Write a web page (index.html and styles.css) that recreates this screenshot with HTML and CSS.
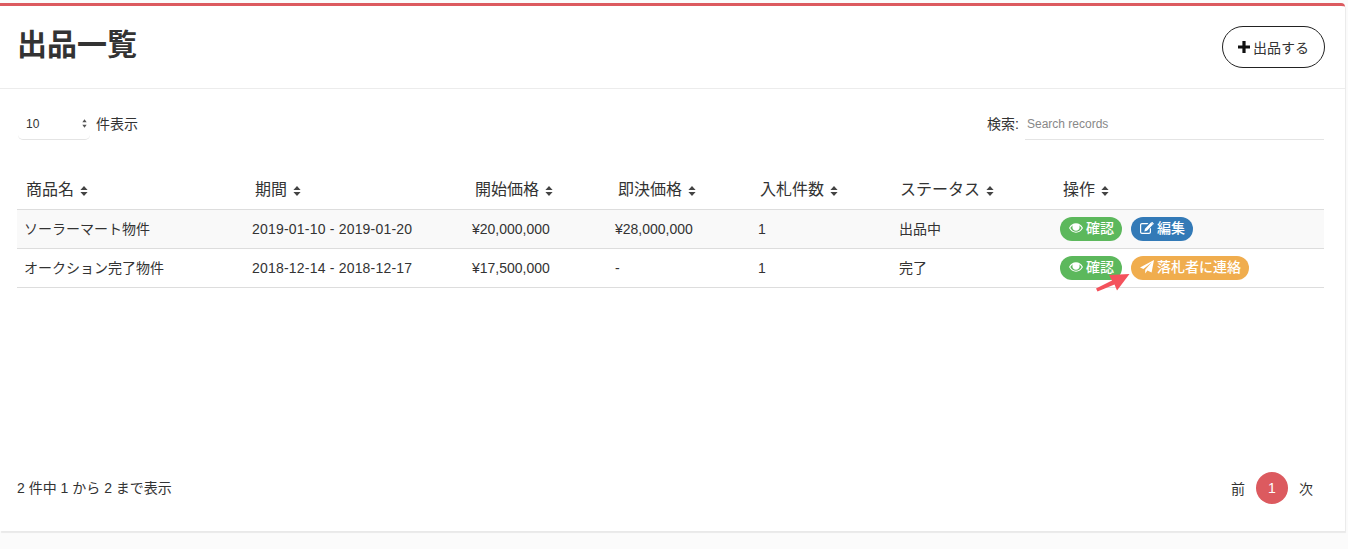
FILE: index.html
```html
<!DOCTYPE html>
<html lang="ja">
<head>
<meta charset="utf-8">
<title>出品一覧</title>
<link rel="stylesheet" href="styles.css">
</head>
<body>
<main class="card">
  <header class="card-head">
    <h1 class="title">出品一覧</h1>
    <a class="add-btn"><svg class="ico-plus" viewBox="0 0 12 12"><path d="M4.400 0h3.200v4.400H12v3.200H7.600V12H4.400V7.600H0V4.400h4.400z"/></svg>出品する</a>
  </header>
  <div class="card-body">
    <div class="controls">
      <label class="length"><span class="select"><span class="select-value">10</span><svg class="ico-updown" viewBox="0 0 6 10"><path d="M3 0l2.600 3.600H.4zM3 10L.4 6.400h5.200z"/></svg></span>件表示</label>
      <label class="search">検索:<span class="search-input">Search records</span></label>
    </div>
    <table class="grid">
      <colgroup>
        <col class="c1"><col class="c2"><col class="c3"><col class="c4"><col class="c5"><col class="c6"><col class="c7">
      </colgroup>
      <thead>
        <tr>
          <th class="h1">商品名<svg class="ico-sort" viewBox="0 0 8 10"><path d="M4 0l3.600 4H.4zM4 10L.4 6h7.200z"/></svg></th>
          <th>期間<svg class="ico-sort" viewBox="0 0 8 10"><path d="M4 0l3.600 4H.4zM4 10L.4 6h7.200z"/></svg></th>
          <th>開始価格<svg class="ico-sort" viewBox="0 0 8 10"><path d="M4 0l3.600 4H.4zM4 10L.4 6h7.200z"/></svg></th>
          <th>即決価格<svg class="ico-sort" viewBox="0 0 8 10"><path d="M4 0l3.600 4H.4zM4 10L.4 6h7.200z"/></svg></th>
          <th class="h5">入札件数<svg class="ico-sort" viewBox="0 0 8 10"><path d="M4 0l3.600 4H.4zM4 10L.4 6h7.200z"/></svg></th>
          <th class="h6">ステータス<svg class="ico-sort" viewBox="0 0 8 10"><path d="M4 0l3.600 4H.4zM4 10L.4 6h7.200z"/></svg></th>
          <th>操作<svg class="ico-sort" viewBox="0 0 8 10"><path d="M4 0l3.600 4H.4zM4 10L.4 6h7.200z"/></svg></th>
        </tr>
      </thead>
      <tbody>
        <tr class="odd">
          <td>ソーラーマート物件</td><td class="period">2019-01-10 - 2019-01-20</td><td>¥20,000,000</td><td>¥28,000,000</td><td>1</td><td>出品中</td>
          <td><span class="pill green"><svg class="ico" viewBox="0 0 16 12"><path fill-rule="evenodd" d="M8 .6C4.600.6 1.800 2.600.2 5.600L0 6l.2.4c1.600 3 4.400 5 7.800 5s6.200-2 7.800-5L16 6l-.2-.4C14.200 2.600 11.400.6 8 .6zM8 10.200C5.200 10.200 2.900 8.600 1.500 6c.7-1.300 1.700-2.400 3-3.100C4.100 3.500 3.900 4.200 3.900 5 3.900 7.300 5.700 9.100 8 9.100S12.100 7.300 12.100 5c0-.8-.2-1.500-.6-2.100 1.300.7 2.300 1.800 3 3.100-1.400 2.600-3.700 4.200-6.500 4.200z"/></svg>確認</span><span class="pill blue"><svg class="ico" viewBox="0 0 14 12"><path d="M2 1h6.500L7.300 2.200H2.200c-.6 0-1 .4-1 1v6.600c0 .6.4 1 1 1h6.600c.6 0 1-.4 1-1V7l1.200-1.200V10c0 1.100-.9 2-2 2H2c-1.100 0-2-.9-2-2V3c0-1.100.9-2 2-2zM11 .6l2 2L7 8.700l-2.700.7.700-2.700zM11.700 0c.2-.1.5-.1.700.1l1.300 1.300c.2.200.2.500 0 .700l-.4.400-2-2z"/></svg>編集</span></td>
        </tr>
        <tr>
          <td>オークション完了物件</td><td class="period">2018-12-14 - 2018-12-17</td><td>¥17,500,000</td><td>-</td><td>1</td><td>完了</td>
          <td><span class="pill green"><svg class="ico" viewBox="0 0 16 12"><path fill-rule="evenodd" d="M8 .6C4.600.6 1.800 2.600.2 5.600L0 6l.2.4c1.600 3 4.400 5 7.800 5s6.200-2 7.800-5L16 6l-.2-.4C14.200 2.600 11.400.6 8 .6zM8 10.200C5.200 10.200 2.900 8.600 1.500 6c.7-1.300 1.700-2.400 3-3.100C4.100 3.500 3.900 4.200 3.900 5 3.900 7.300 5.700 9.100 8 9.100S12.100 7.300 12.100 5c0-.8-.2-1.500-.6-2.100 1.300.7 2.300 1.800 3 3.100-1.400 2.600-3.700 4.200-6.500 4.200z"/></svg>確認</span><span class="pill orange"><svg class="ico ico-plane" viewBox="0 0 14 14"><path d="M14 0L11.600 12.400 7.400 10.600 5.200 13.600V9.700L11.800 2.200 3.400 8.900 0 7.400z"/></svg>落札者に連絡</span><svg class="arrow" viewBox="0 0 35 20"><path d="M33.500 2L21 18.500 18.500 12.500 1.500 19.500 0 16.500 16 8.500 13 3z"/></svg></td>
        </tr>
      </tbody>
    </table>
    <div class="foot">
      <div class="info">2 件中 1 から 2 まで表示</div>
      <nav class="pager"><span>前</span><span class="current">1</span><span>次</span></nav>
    </div>
  </div>
</main>
</body>
</html>
```
FILE: styles.css
```css
* { box-sizing: border-box; }
html, body { margin: 0; height: 100%; }
body {
  background: #fbfbfb;
  font-family: "Liberation Sans", "Noto Sans CJK JP", sans-serif;
  color: #333;
  font-size: 14px;
  padding: 3px 3px 0 0;
  overflow: hidden;
}
.card {
  background: #fff;
  border-top: 3px solid #dc5a5f;
  border-top-right-radius: 4px;
  height: 528px;
  box-shadow: 1px 2px 1px rgba(0,0,0,.07);
}
.card-head {
  height: 83px;
  border-bottom: 1px solid #ececec;
  display: flex;
  align-items: center;
  justify-content: space-between;
  padding: 0 20px 0 17px;
}
.title { margin: 0 0 4px; font-size: 30px; font-weight: 700; line-height: 1.2; color: #333; }
.add-btn {
  width: 103px; height: 42px;
  border: 1px solid #222;
  border-radius: 21px;
  display: flex; align-items: center; justify-content: center;
  font-size: 14px; color: #333;
}
.ico-plus { width: 12px; height: 12px; margin-right: 3px; fill: #111; }
.card-body { padding: 0 21px 0 17px; }
.controls { height: 73px; display: flex; justify-content: space-between; padding-top: 18px; }
.length, .search { display: flex; align-items: flex-start; line-height: 34px; font-size: 14px; }
.length { margin-left: 1px; }
.select {
  width: 72px; height: 33px; padding: 0 3px 0 8px;
  margin-right: 6px;
  border-bottom: 1px solid #e4e4e4; border-radius: 0 0 5px 5px;
  display: flex; align-items: center; justify-content: space-between;
  font-size: 12px;
}
.select-value { padding-top: 2px; }
.ico-updown { width: 5px; height: 9px; fill: #555; }
.search-input {
  width: 299px; height: 33px; margin-left: 6px; padding-left: 2px;
  border-bottom: 1px solid #e4e4e4;
  color: #888; font-size: 12px;
}
.grid { width: 1307px; border-collapse: collapse; table-layout: fixed; }
.c1 { width: 228px; } .c2 { width: 220px; } .c3 { width: 143px; } .c4 { width: 143px; }
.c5 { width: 141px; } .c6 { width: 161px; } .c7 { width: 271px; }
.grid th {
  height: 47px; padding: 6px 0 0 10px; text-align: left;
  font-size: 16px; font-weight: 400; color: #333;
  border-bottom: 1px solid #ddd;
  vertical-align: middle;
}
.grid th.h1 { padding-left: 9px; }
.grid th.h5 { padding-left: 9px; }
.grid th.h6 { padding-left: 8px; }
.ico-sort { width: 8px; height: 10px; margin-left: 6px; fill: #444; vertical-align: -1px; }
.grid td {
  height: 39px; padding: 0 0 0 7px;
  font-size: 14px; line-height: 20px; color: #333;
  border-bottom: 1px solid #ddd;
  position: relative;
  white-space: nowrap;
}
.grid td.period { letter-spacing: .2px; }
.odd td { background: #f9f9f9; }
.pill {
  display: inline-flex; align-items: center;
  height: 24px; padding: 0 8px 1px 9px;
  border-radius: 12px;
  color: #fff; font-size: 14px; font-weight: 500;
  margin-right: 9px;
  vertical-align: middle;
}
.ico { height: 12px; width: 14px; margin-right: 3px; fill: #fff; }
.ico-plane { height: 14px; }
.green { background: #5cb85c; }
.blue { background: #337ab7; }
.orange { background: #f0ad4e; }
.arrow { position: absolute; left: 43px; top: 23px; width: 35px; height: 20px; fill: #f4525c; }
.foot { display: flex; justify-content: space-between; align-items: center; margin-top: 184px; }
.info { font-size: 14px; margin-bottom: 2px; }
.pager { display: flex; align-items: center; gap: 11px; padding-right: 11px; font-size: 14px; }
.current {
  width: 32px; height: 32px; border-radius: 50%;
  background: #dc5a5f; color: #fff;
  display: flex; align-items: center; justify-content: center;
}
```
